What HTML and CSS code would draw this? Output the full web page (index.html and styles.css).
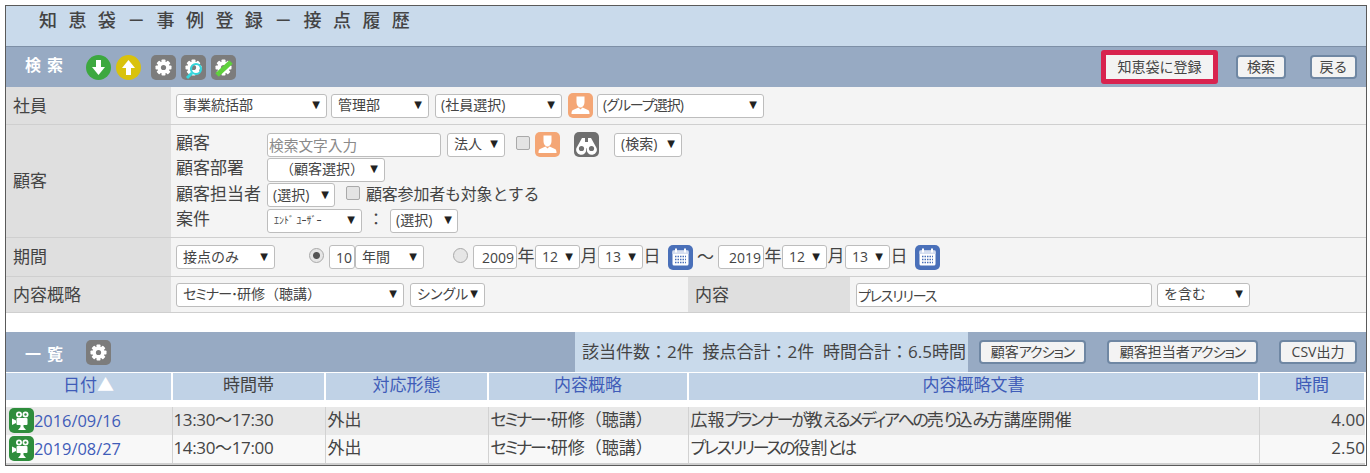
FILE: index.html
```html
<!DOCTYPE html>
<html lang="ja">
<head>
<meta charset="utf-8">
<title>知恵袋 - 事例登録 - 接点履歴</title>
<link rel="stylesheet" href="styles.css">
</head>
<body>
<svg class="defs" width="0" height="0" aria-hidden="true">
  <symbol id="gear" viewBox="0 0 25 25">
    <rect width="25" height="25" rx="5" fill="#7c7c7c"/>
    <g fill="#fff">
      <rect x="10.500" y="4.500" width="4" height="16" rx=".8"/>
      <rect x="10.500" y="4.500" width="4" height="16" rx=".8" transform="rotate(45 12.500 12.500)"/>
      <rect x="10.500" y="4.500" width="4" height="16" rx=".8" transform="rotate(90 12.500 12.500)"/>
      <rect x="10.500" y="4.500" width="4" height="16" rx=".8" transform="rotate(135 12.500 12.500)"/>
      <circle cx="12.500" cy="12.500" r="6"/>
    </g>
    <circle cx="12.500" cy="12.500" r="2.600" fill="#7c7c7c"/>
  </symbol>
  <symbol id="person" viewBox="0 0 25 25">
    <rect width="25" height="25" rx="5" fill="#f4a675"/>
    <path fill="#fff" d="M8.500 3.500h8v5.500c0 3-1.800 5.500-4 5.500s-4-2.500-4-5.500zM10.500 14.500l2 2 2-2 5.500 2.500c1.200.6 1.500 2 1.500 4h-18c0-2 .3-3.400 1.500-4z"/>
  </symbol>
  <symbol id="binoculars" viewBox="0 0 25 25">
    <rect width="25" height="25" rx="5" fill="#6f6f6f"/>
    <path fill="#fff" d="M8 6h3v4h3V6h3l5 9a5 5 0 1 1-9 1.500h-1A5 5 0 1 1 3 15z"/>
    <circle cx="7.500" cy="16.500" r="2.600" fill="#6f6f6f"/>
    <circle cx="17.500" cy="16.500" r="2.600" fill="#6f6f6f"/>
  </symbol>
  <symbol id="cal" viewBox="0 0 25 25">
    <rect width="25" height="25" rx="5" fill="#4a70b9"/>
    <rect x="4.500" y="5.500" width="16" height="15" rx="1.500" fill="#fff"/>
    <rect x="4.500" y="5.500" width="16" height="3.500" fill="#d5def0"/>
    <rect x="7" y="3.500" width="2" height="4" fill="#fff"/>
    <rect x="16" y="3.500" width="2" height="4" fill="#fff"/>
    <path stroke="#4a70b9" stroke-width="1.500" stroke-dasharray="1.500 1" d="M7 11.500h11M7 14.500h11M7 17.500h11"/>
  </symbol>
  <symbol id="movie" viewBox="0 0 25 25">
    <rect width="25" height="25" rx="5" fill="#2e8d3c"/>
    <circle cx="10" cy="6.500" r="3" fill="#fff"/>
    <circle cx="16.500" cy="6.500" r="3" fill="#fff"/>
    <circle cx="10" cy="6.500" r="1.200" fill="#2e8d3c"/>
    <circle cx="16.500" cy="6.500" r="1.200" fill="#2e8d3c"/>
    <rect x="7.500" y="10" width="11" height="7" rx="1" fill="#fff"/>
    <path fill="#fff" d="M3 10.500l4 2v2.500l-4 2zM11.500 17h3v2l2.500 3h-8l2.500-3z"/>
  </symbol>
</svg>
<main class="frame">
  <h1 class="title">知恵袋－事例登録－接点履歴</h1>

  <section class="bar">
    <h2 class="bar-title">検索</h2>
    <div class="bar-icons">
      <svg class="ic" viewBox="0 0 25 25"><circle cx="12.500" cy="12.500" r="12.500" fill="#3da83f"/><path fill="#fff" d="M10 5h5v7h4l-6.500 8L6 12h4z"/></svg>
      <svg class="ic" viewBox="0 0 25 25"><circle cx="12.500" cy="12.500" r="12.500" fill="#d9c20c"/><path fill="#fff" d="M10 20h5v-7h4L12.500 5 6 13h4z"/></svg>
      <svg class="ic ic-sep"><use href="#gear"/></svg>
      <svg class="ic"><use href="#gear"/><circle cx="15" cy="14" r="5" fill="none" stroke="#35d6dc" stroke-width="2.200"/><path stroke="#35d6dc" stroke-width="3" d="M11 18l-5 5"/></svg>
      <svg class="ic"><use href="#gear"/><path stroke="#5fd03c" stroke-width="5" d="M6 20L20 7"/></svg>
    </div>
    <div class="bar-actions">
      <span class="highlight"><button class="btn btn-register">知恵袋に登録</button></span>
      <button class="btn btn-search">検索</button>
      <button class="btn btn-back">戻る</button>
    </div>
  </section>

  <section class="form">
    <div class="row row-staff">
      <div class="label">社員</div>
      <div class="field">
        <span class="sel w151">事業統括部<i>▼</i></span>
        <span class="sel w98">管理部<i>▼</i></span>
        <span class="sel w127 gap-l2 snug">(社員選択)<i>▼</i></span>
        <svg class="ic gap-l2"><use href="#person"/></svg>
        <span class="sel w167 snug"><span class="kana-sel">(グループ選択)</span><i>▼</i></span>
      </div>
    </div>
    <div class="row row-client">
      <div class="label">顧客</div>
      <div class="field stack">
        <div class="line">
          <span class="cap">顧客</span>
          <input class="inp inp-search w174" placeholder="検索文字入力">
          <span class="sel w58 gap-l2">法人<i>▼</i></span>
          <span class="chk gap-l7"></span>
          <svg class="ic gap-l1"><use href="#person"/></svg>
          <svg class="ic gap-l10"><use href="#binoculars"/></svg>
          <span class="sel w68 gap-l11">(検索)<i>▼</i></span>
        </div>
        <div class="line">
          <span class="cap">顧客部署</span>
          <span class="sel w118 center">（顧客選択）<i>▼</i></span>
        </div>
        <div class="line">
          <span class="cap">顧客担当者</span>
          <span class="sel w68 tight">(選択)<i>▼</i></span>
          <span class="chk gap-l7"></span>
          <span class="text gap-l2">顧客参加者も対象とする</span>
        </div>
        <div class="line">
          <span class="cap">案件</span>
          <span class="sel w95 tiny">ｴﾝﾄﾞ ﾕｰｻﾞｰ<i>▼</i></span>
          <span class="text colon">：</span>
          <span class="sel w68 tight">(選択)<i>▼</i></span>
        </div>
      </div>
    </div>
    <div class="row row-period">
      <div class="label">期間</div>
      <div class="field">
        <span class="sel w99">接点のみ<i>▼</i></span>
        <span class="radio on gap-l31"></span>
        <span class="inp-num w26">10</span>
        <span class="sel w69">年間<i>▼</i></span>
        <span class="radio gap-l24"></span>
        <span class="inp-num w44">2009</span><span class="unit">年</span>
        <span class="sel w45">12<i>▼</i></span><span class="unit">月</span>
        <span class="sel w45">13<i>▼</i></span><span class="unit">日</span>
        <svg class="ic gap-l9"><use href="#cal"/></svg>
        <span class="wave">～</span>
        <span class="inp-num w46">2019</span><span class="unit">年</span>
        <span class="sel w45">12<i>▼</i></span><span class="unit">月</span>
        <span class="sel w45">13<i>▼</i></span><span class="unit">日</span>
        <svg class="ic gap-l9"><use href="#cal"/></svg>
      </div>
    </div>
    <div class="row row-content">
      <div class="label">内容概略</div>
      <div class="field field-main">
        <span class="sel w228"><span class="kana-sel">セミナー･</span>研修（聴講）<i>▼</i></span>
        <span class="sel w75 gap-l6"><span class="kana">シングル</span><i>▼</i></span>
      </div>
      <div class="label label-mid">内容</div>
      <div class="field field-rest">
        <input class="inp inp-kana w296" value="プレスリリース">
        <span class="sel w93 gap-l5">を含む<i>▼</i></span>
      </div>
    </div>
  </section>

  <div class="spacer"></div>

  <section class="bar">
    <h2 class="bar-title list-title">一覧</h2>
    <svg class="ic"><use href="#gear"/></svg>
    <div class="summary">該当件数：2件&nbsp; 接点合計：2件&nbsp; 時間合計：6.5時間</div>
    <div class="list-actions">
      <button class="btn btn-client">顧客<span class="kana-sel">アクション</span></button>
      <button class="btn btn-contact">顧客担当者<span class="kana-sel">アクション</span></button>
      <button class="btn btn-csv">CSV出力</button>
    </div>
  </section>

  <table class="list">
    <colgroup>
      <col class="c1"><col class="c2"><col class="c3"><col class="c4"><col class="c5"><col class="c6">
    </colgroup>
    <thead>
      <tr>
        <th><a href="#">日付</a><span class="sort">▲</span></th>
        <th>時間帯</th>
        <th><a href="#">対応形態</a></th>
        <th><a href="#">内容概略</a></th>
        <th><a href="#">内容概略文書</a></th>
        <th><a href="#">時間</a></th>
      </tr>
    </thead>
    <tbody>
      <tr class="gapline"><td colspan="6"></td></tr>
      <tr class="odd">
        <td class="date"><svg class="ic"><use href="#movie"/></svg><a href="#">2016/09/16</a></td>
        <td class="time">13:30～17:30</td>
        <td>外出</td>
        <td><span class="kn">セミナー･</span>研修（聴講）</td>
        <td>広報<span class="kn">プランナーが</span>教<span class="kn">えるメディアへの</span>売<span class="kn">り</span>込<span class="kn">み</span>方講座開催</td>
        <td class="num">4.00</td>
      </tr>
      <tr class="even">
        <td class="date"><svg class="ic"><use href="#movie"/></svg><a href="#">2019/08/27</a></td>
        <td class="time">14:30～17:00</td>
        <td>外出</td>
        <td><span class="kn">セミナー･</span>研修（聴講）</td>
        <td><span class="kn">プレスリリースの</span>役割<span class="kn">とは</span></td>
        <td class="num">2.50</td>
      </tr>
    </tbody>
  </table>
</main>
</body>
</html>
```

FILE: styles.css
```css
* { box-sizing: border-box; }
html, body { background: #fff; }
body {
  margin: 5px 3px 0 5px;
  font-family: "Open Sans", "Noto Sans CJK JP", sans-serif;
  color: #444;
  font-size: 17px;
}
.defs { position: absolute; }
.frame { border: 1px solid #5a5a5a; height: 461px; overflow: hidden; }
.kana { font-feature-settings: "palt"; }
.kana-sel { font-feature-settings: "palt"; letter-spacing: -1px; }
.kn { font-feature-settings: "palt"; letter-spacing: -2.3px; }

.title {
  margin: 0;
  height: 41px;
  padding: 1px 0 0 33px;
  background: #c9daeb;
  border-bottom: 1px solid #7d8fa6;
  font-size: 18px;
  line-height: 26px;
  font-weight: 500;
  letter-spacing: 11.4px;
  color: #444;
}

.ic { width: 25px; height: 25px; flex: none; display: block; }
.ic-sep { margin-left: 5px; }

.bar { display: flex; align-items: center; background: #97aac3; height: 40px; }
.bar-title { margin: 0 0 0 19px; width: 61px; color: #fff; font-size: 16px; font-weight: 700; letter-spacing: 6px; line-height: 20px; padding-bottom: 4px; }
.bar-icons { display: flex; gap: 5px; }
.bar-actions { margin-left: auto; display: flex; align-items: center; padding-right: 9px; }
.highlight { display: block; border: 5px solid #d8234f; border-radius: 3px; background: #f3f3f3; height: 34px; width: 117px; margin-right: 18px; }
.btn {
  font: inherit;
  font-size: 14px;
  line-height: 18px;
  color: #444;
  height: 24px;
  padding: 0;
  background: #f3f3f3;
  border: 2px solid #6f87a3;
  border-radius: 4px;
  display: block;
}
.btn-register { width: 107px; height: 24px; border: 0; background: transparent; }
.btn-search { width: 50px; margin-right: 24px; }
.btn-back { width: 47px; }

.row { display: flex; border-bottom: 1px solid #cfcfcf; background: #f4f4f4; }
.row-staff { height: 38px; }
.row-client { height: 113px; }
.row-period { height: 39px; }
.row-content { height: 36px; }
.label { width: 165px; flex: none; background: #dfdfdf; padding: 0 0 3px 7px; display: flex; align-items: center; font-size: 17px; }
.label-mid { width: 162px; }
.field { display: flex; align-items: center; padding-left: 5px; flex: 1; }
.field-main { flex: none; width: 517px; }
.field-rest { padding-left: 6px; }
.stack { flex-direction: column; align-items: flex-start; padding-top: 7px; }
.line { display: flex; align-items: center; height: 25.3px; }
.cap { width: 91px; font-size: 17px; white-space: nowrap; line-height: 20px; padding-bottom: 3px; }
.text { font-size: 16px; letter-spacing: -0.2px; white-space: nowrap; line-height: 20px; padding-bottom: 3px; }
.colon { width: 28px; text-align: center; }

.sel {
  display: flex;
  align-items: center;
  height: 24px;
  padding: 0 6px 1px;
  background: #fff;
  border: 1px solid #bdbdbd;
  border-radius: 3px;
  font-size: 14px;
  line-height: 18px;
  white-space: nowrap;
  flex: none;
}
.sel i { margin-left: auto; font-style: normal; font-size: 10px; color: #222; font-family: "DejaVu Sans", sans-serif; }
.center { padding-left: 12px; }
.tight { padding: 0 5px 1px; }
.snug { padding-left: 5px; }
.tiny { font-size: 10px; }
.inp, .inp-num {
  height: 24px;
  background: #fff;
  border: 1px solid #bdbdbd;
  border-radius: 3px;
  font-family: inherit;
  font-size: 14px;
  color: #444;
  padding: 0 2px;
  flex: none;
}
.inp::placeholder { color: #8a8a8a; opacity: 1; }
.inp-search { padding: 0 1px; font-size: 14.7px; }
.inp-kana { font-feature-settings: "palt"; letter-spacing: -1.2px; padding-left: 1px; }
.inp-num { display: flex; align-items: center; justify-content: flex-end; }
.unit { width: 18px; font-size: 17px; text-align: center; flex: none; line-height: 20px; padding-bottom: 3px; }
.wave { width: 25px; text-align: center; font-size: 17px; flex: none; line-height: 20px; }
.chk { width: 14px; height: 14px; background: #e4e4e4; border: 1px solid #a9a9a9; border-radius: 2px; flex: none; margin-bottom: 4px; }
.radio { width: 15px; height: 15px; border-radius: 50%; background: #e6e6e6; border: 1px solid #a9a9a9; flex: none; margin-right: 5px; margin-bottom: 4px; }
.radio.on { background: radial-gradient(circle, #555 0 3px, #e6e6e6 4px); }

.w26 { width: 26px; } .w44 { width: 44px; } .w45 { width: 45px; } .w46 { width: 46px; } .w58 { width: 58px; } .w68 { width: 68px; }
.w69 { width: 69px; } .w75 { width: 75px; } .w93 { width: 93px; } .w95 { width: 95px; }
.w98 { width: 98px; } .w99 { width: 99px; } .w118 { width: 118px; } .w127 { width: 127px; }
.w151 { width: 151px; } .w167 { width: 167px; } .w174 { width: 174px; } .w228 { width: 228px; } .w296 { width: 296px; }
.field > .w98 { margin-left: 4px; }
.gap-l1 { margin-left: 5px; } .gap-l2 { margin-left: 6px; } .gap-l5 { margin-left: 5px; } .gap-l6 { margin-left: 6px; }
.gap-l7 { margin-left: 11px; } .gap-l9 { margin-left: 7px; } .gap-l10 { margin-left: 14px; } .gap-l11 { margin-left: 15px; }
.gap-l24 { margin-left: 29px; } .gap-l31 { margin-left: 34px; }
.row-staff .ic + .sel { margin-left: 4px; }

.spacer { height: 19px; background: #fff; }

.list-title { font-size: 16px; padding: 3px 0 0; }
.summary {
  margin-left: auto;
  width: 393px;
  height: 100%;
  background: #c9daeb;
  display: flex;
  align-items: center;
  padding: 0 0 3px 7px;
  font-size: 17px;
  white-space: nowrap;
  flex: none;
}
.list-actions { display: flex; align-items: center; padding: 0 9px 0 11px; flex: none; }
.btn-client { width: 107px; margin-right: 21px; }
.btn-contact { width: 151px; margin-right: 21px; }
.btn-csv { width: 78px; }

.list { width: 100%; border-collapse: collapse; table-layout: fixed; font-size: 17px; border-bottom: 2px solid #cfcfcf; }
.c1 { width: 166px; } .c2 { width: 153px; } .c3 { width: 163px; } .c4 { width: 200px; } .c5 { width: 571px; }
.list th { height: 27px; padding: 0 0 2px; background: #c0d2e6; border: 2px solid #fff; border-width: 1px 2px 0 0; font-weight: 400; font-size: 17px; line-height: 20px; color: #444; }
.list th a, .list td a { color: #3f5cb8; text-decoration: none; }
.sort { color: #fff; }
.list .gapline td { height: 7px; padding: 0; background: #fff; border: 0; line-height: 0; font-size: 0; }
.list td { padding: 0 0 2px 2px; border-right: 1px solid #d2d2d2; white-space: nowrap; line-height: 20px; height: 28px; }
.list tr.even td { height: 29px; }
.odd td { background: #e8e8e8; }
.even td { background: #f8f8f8; }
.list td.date { padding: 0 0 0 3px; line-height: 25px; }
.date .ic { display: inline-block; vertical-align: middle; margin-top: -2px; }
.date a { font-size: 16.4px; }
.list td.time { padding-left: 1px; letter-spacing: -0.35px; }
.num { text-align: right; }
.list td.num { padding: 0 0 2px; border-right: 0; }
```
